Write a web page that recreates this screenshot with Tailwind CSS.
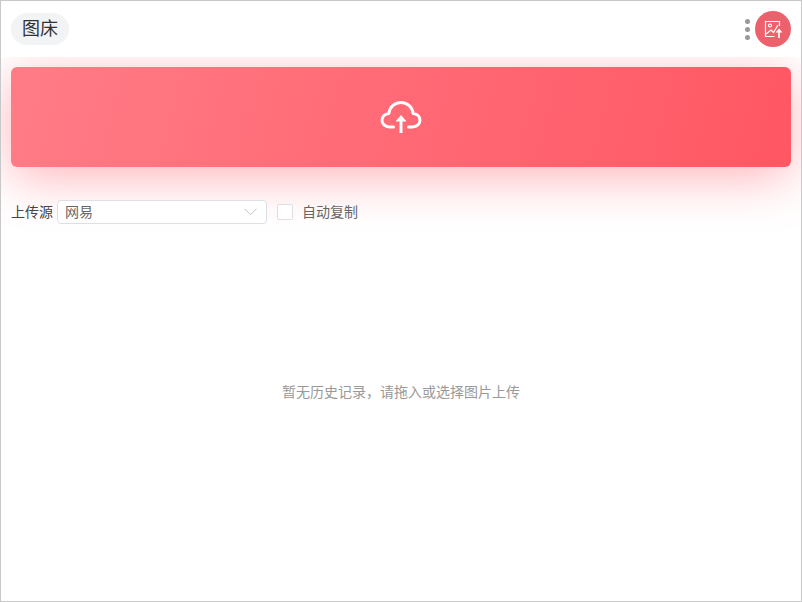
<!DOCTYPE html>
<html lang="zh-CN">
<head>
    <meta charset="UTF-8">
    <title>图床</title>
    <script src="https://cdn.jsdelivr.net/npm/@tailwindcss/browser@4"></script>
</head>
<body class="bg-white">
    <div class="w-[802px] h-[602px] border border-[#c8c8c8] bg-white flex flex-col overflow-hidden font-['Liberation_Sans','Noto_Sans_CJK_SC',sans-serif]">
        <!-- Header -->
        <header class="relative z-10 h-[56px] shrink-0 bg-white flex items-center justify-between pl-[10px] pr-[10px]">
            <div class="h-[32px] w-[58px] rounded-full bg-[#f2f3f5] flex items-center justify-center text-[18px] text-[#333]">图床</div>
            <div class="flex items-center">
                <div class="flex flex-col gap-[3px] mr-[5px]">
                    <span class="w-[5px] h-[5px] rounded-full bg-[#999]"></span>
                    <span class="w-[5px] h-[5px] rounded-full bg-[#999]"></span>
                    <span class="w-[5px] h-[5px] rounded-full bg-[#999]"></span>
                </div>
                <div class="w-[36px] h-[36px] rounded-full bg-[#ec616c] flex items-center justify-center">
                    <svg width="24" height="24" viewBox="0 0 24 24" fill="none" stroke="#fff" stroke-width="1.2">
                        <path d="M13.500 19.500H4.500V4.500H18.500V9"/>
                        <path d="M5 17l5-4 2.500 2.500L17 8"/>
                        <circle cx="9" cy="8.500" r="1.500"/>
                        <path d="M18 21v-7" stroke-width="1.600"/>
                        <path d="M14.500 15.500l3.500-4 3.500 4z" fill="#fff" stroke="none"/>
                    </svg>
                </div>
            </div>
        </header>

        <main class="flex-1 flex flex-col px-[10px] pt-[10px]">
            <!-- Upload area -->
            <div class="h-[100px] shrink-0 rounded-[6px] bg-[linear-gradient(105deg,#ff7c87,#ff5763)] shadow-[0_10px_50px_rgba(255,87,99,0.45)] flex items-center justify-center">
                <svg width="42" height="34" viewBox="0 0 42 34" fill="none" stroke="#fff" stroke-width="3" stroke-linecap="round" stroke-linejoin="round">
                    <path d="M13.500 27H9.500C5 27 2 23.800 2 20.200 2 16.500 5 13.600 8.800 13.500 9.600 7.200 14.500 2.500 21 2.500c6.400 0 11.400 4.700 12.200 11 3.800 .1 6.800 3 6.800 6.700 0 3.600-3 6.800-7.500 6.800h-4"/>
                    <path d="M21 33V18" stroke-linecap="butt"/>
                    <path d="M15.500 21.500L21 15l5.500 6.500z" fill="#fff" stroke="none"/>
                </svg>
            </div>

            <!-- Options -->
            <div class="mt-[33px] flex items-center h-[24px] text-[14px]">
                <span class="text-[#444] w-[46px]">上传源</span>
                <div class="w-[210px] h-[24px] rounded-[4px] border border-[#dcdfe6] bg-white flex items-center justify-between pl-[7px] pr-[9px] text-[#666]">
                    <span>网易</span>
                    <svg width="13" height="8" viewBox="0 0 13 8" fill="none" stroke="#c0c4cc" stroke-width="1"><path d="M.5.700l6 6 6-6"/></svg>
                </div>
                <span class="ml-[10px] w-[16px] h-[16px] rounded-[2px] border border-[#dcdfe6] bg-white"></span>
                <span class="ml-[9px] text-[#666]">自动复制</span>
            </div>

            <!-- Empty state -->
            <div class="mt-[158px] text-center text-[14px] text-[#999]">暂无历史记录，请拖入或选择图片上传</div>
        </main>
    </div>
</body>
</html>
